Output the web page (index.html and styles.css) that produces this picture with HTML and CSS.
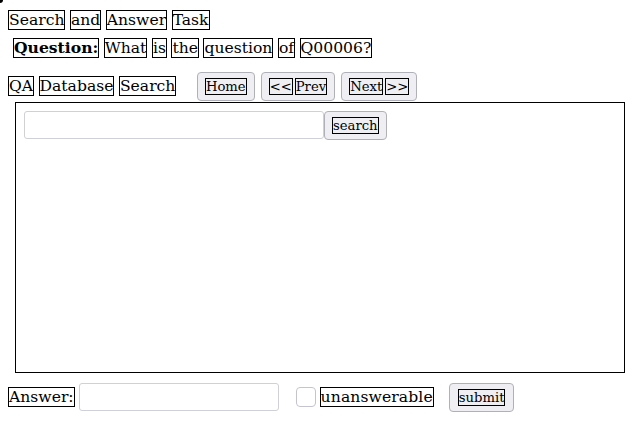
FILE: index.html
```html
<!DOCTYPE html>
<html>
<head>
<meta charset="utf-8">
<link rel="stylesheet" href="styles.css">
</head>
<body>
<div class="cursor"></div>
<div class="row title"><span class="w">Search</span><span class="w">and</span><span class="w">Answer</span><span class="w">Task</span></div>
<div class="row question"><span class="w b">Question:</span><span class="w">What</span><span class="w">is</span><span class="w">the</span><span class="w">question</span><span class="w">of</span><span class="w">Q00006?</span></div>
<div class="row nav">
  <span class="w">QA</span><span class="w">Database</span><span class="w">Search</span>
  <button class="btn home"><span class="w">Home</span></button>
  <button class="btn"><span class="w">&lt;&lt;</span><span class="w">Prev</span></button>
  <button class="btn"><span class="w">Next</span><span class="w">&gt;&gt;</span></button>
</div>
<div class="panel">
  <div class="searchrow">
    <input class="field search-field" type="text">
    <button class="btn sbtn"><span class="w">search</span></button>
  </div>
</div>
<div class="answer">
  <span class="w">Answer:</span>
  <input class="field answer-field" type="text">
  <span class="check"></span>
  <span class="w wide">unanswerable</span>
  <button class="btn submit"><span class="w">submit</span></button>
</div>
</body>
</html>
```
FILE: styles.css
```css
html, body { background: #fff; }
body {
  margin: 8px;
  font-family: "DejaVu Serif", serif;
  font-size: 15.6px;
  color: #000;
}
.cursor {
  position: absolute;
  left: 0; top: 0;
  width: 3px; height: 3px;
  background: #000;
  border-bottom-right-radius: 3px;
}
.w { border: 1px solid #000; line-height: 18px; }
.b { font-weight: bold; }
.wide { letter-spacing: 0.1px; }
.row { display: flex; align-items: center; gap: 4.5px; }
.title { height: 21px; margin-top: 1px; }
.question { margin-top: 7px; padding-left: 5px; height: 21px; }
.nav {
  margin-top: 13px;
  height: 30px;
}
.btn {
  font-family: "DejaVu Serif", serif;
  font-size: 13.2px;
  background: #efeff3;
  border: 1px solid #b0b0b8;
  border-radius: 4px;
  height: 29px;
  padding: 0 7px;
  color: #000;
  display: inline-flex;
  align-items: center;
  gap: 2px;
}
.btn .w { line-height: 15px; }
.home { margin-left: 16px; }
.nav .btn + .btn { margin-left: 1.5px; }
.panel {
  margin: 1px 7px 0 7px;
  border: 1px solid #000;
  height: 261px;
  padding: 8px 0 0 8px;
}
.searchrow { display: flex; align-items: flex-start; }
.field {
  border: 1px solid #d0d0d8;
  border-radius: 3px;
  height: 28px;
  box-sizing: border-box;
  padding: 0;
  margin: 0;
  outline: none;
}
.search-field { width: 300px; }
.sbtn { height: 29px; }
.answer {
  margin-top: 9px;
  display: flex;
  align-items: center;
  height: 30px;
}
.answer-field { width: 200px; margin-left: 4px; }
.check {
  width: 18px; height: 18px;
  border: 1px solid #c4c4d0;
  border-radius: 4px;
  margin-left: 17px;
  margin-right: 4px;
}
.submit { margin-left: 15px; padding: 0 8px; }
```
